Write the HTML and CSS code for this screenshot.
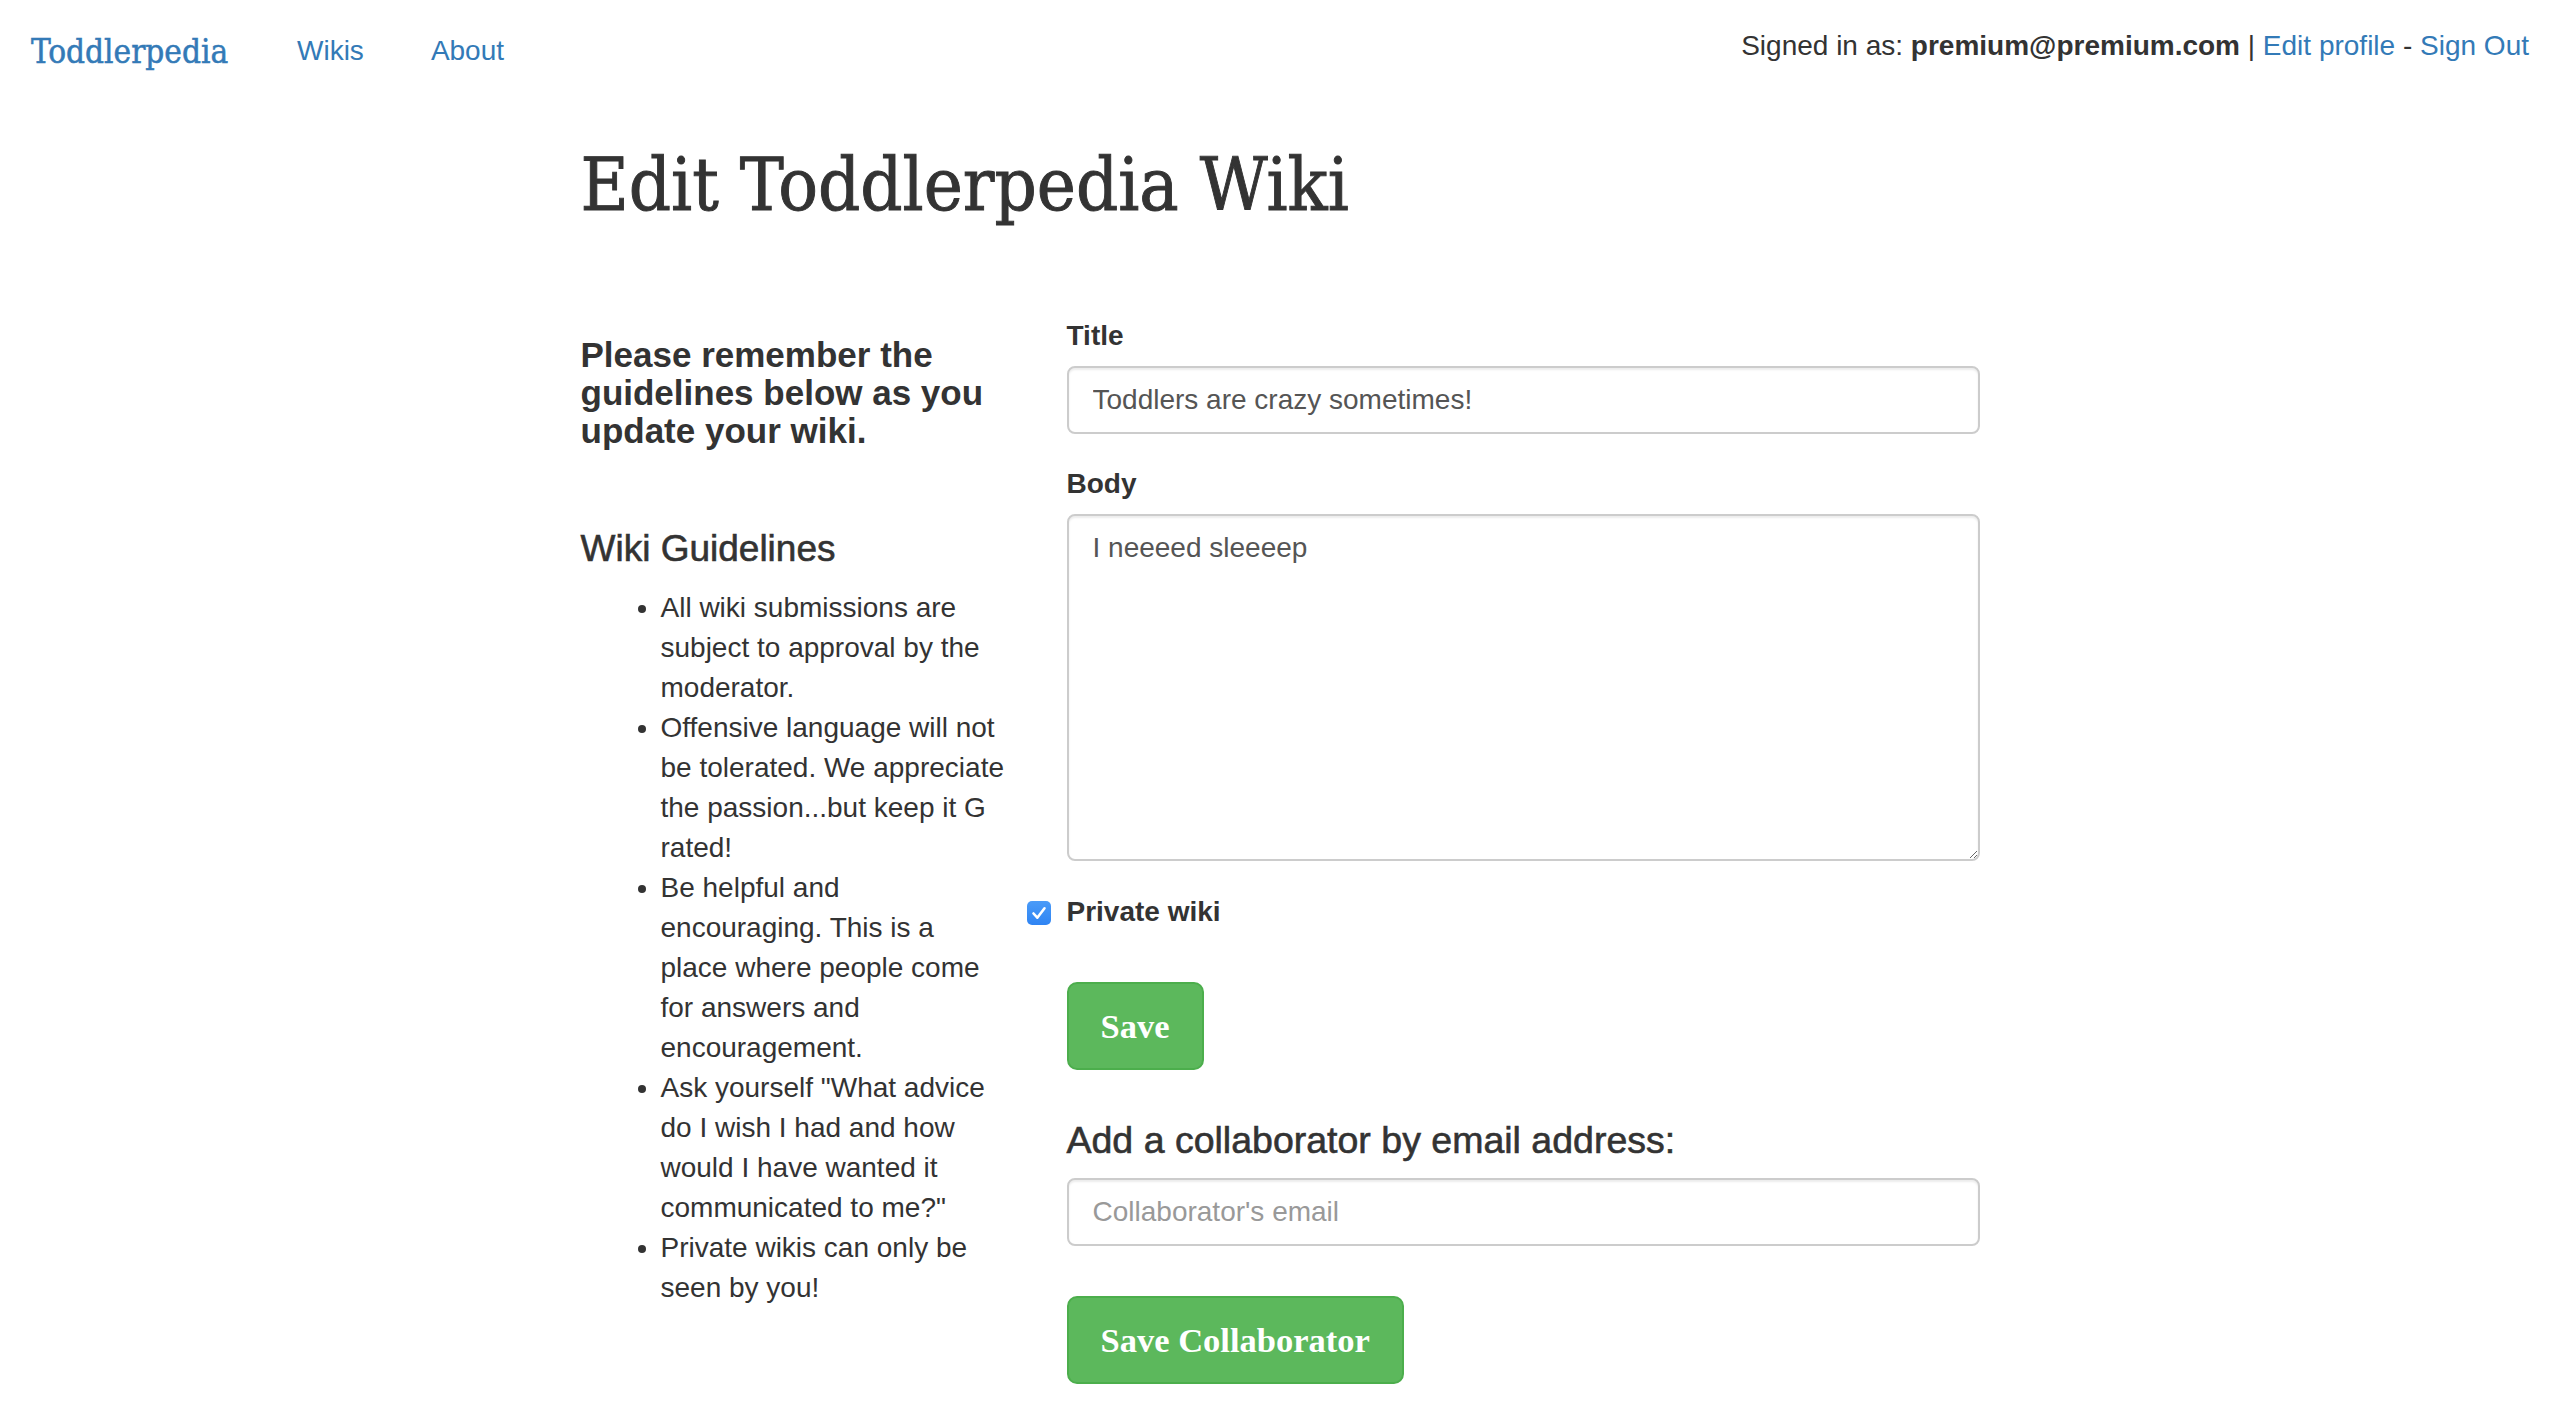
FILE: index.html
```html
<!DOCTYPE html>
<html lang="en">
<head>
<meta charset="utf-8">
<title>Edit Toddlerpedia Wiki</title>
<link rel="stylesheet" href="styles.css">
</head>
<body>
<header class="navbar">
  <a class="brand" href="#">Toddlerpedia</a>
  <nav class="nav-links">
    <a href="#">Wikis</a>
    <a href="#">About</a>
  </nav>
  <p class="user-info">Signed in as: <strong>premium@premium.com</strong> | <a href="#">Edit profile</a> - <a href="#">Sign Out</a></p>
</header>

<main class="container">
  <h1 class="page-title">Edit Toddlerpedia Wiki</h1>
  <div class="row">
    <aside class="guide">
      <h4 class="guide-intro">Please remember the<br>guidelines below as you<br>update your wiki.</h4>
      <h4 class="guide-title">Wiki Guidelines</h4>
      <ul class="guide-list">
        <li>All wiki submissions are<br>subject to approval by the<br>moderator.</li>
        <li>Offensive language will not<br>be tolerated. We appreciate<br>the passion...but keep it G<br>rated!</li>
        <li>Be helpful and<br>encouraging. This is a<br>place where people come<br>for answers and<br>encouragement.</li>
        <li>Ask yourself "What advice<br>do I wish I had and how<br>would I have wanted it<br>communicated to me?"</li>
        <li>Private wikis can only be<br>seen by you!</li>
      </ul>
    </aside>

    <section class="edit">
      <form class="wiki-form">
        <div class="form-group">
          <label class="field-label" for="title">Title</label>
          <input class="form-control" id="title" type="text" value="Toddlers are crazy sometimes!">
        </div>
        <div class="form-group">
          <label class="field-label" for="body">Body</label>
          <textarea class="form-control body-area" id="body">I neeeed sleeeep</textarea>
        </div>
        <label class="check-row">
          <span class="checkbox"><svg viewBox="0 0 24 24" width="24" height="24"><path d="M6.5 12.5l3.8 4.2 7.2-9.4" fill="none" stroke="#fff" stroke-width="2.6" stroke-linecap="round" stroke-linejoin="round"/></svg></span>
          <span class="check-text">Private wiki</span>
        </label>
        <button class="btn btn-save" type="button">Save</button>
      </form>

      <h4 class="collab-title">Add a collaborator by email address:</h4>
      <input class="form-control" type="email" placeholder="Collaborator's email">
      <button class="btn btn-collab" type="button">Save Collaborator</button>
    </section>
  </div>
</main>
</body>
</html>
```

FILE: styles.css
```css
* { box-sizing: border-box; }

html, body {
  margin: 0;
  padding: 0;
  background: #fff;
}

body {
  font-family: "Liberation Sans", Arial, sans-serif;
  font-size: 28px;
  line-height: 40px;
  color: #333;
}

a {
  color: #337ab7;
  text-decoration: none;
}

/* ---------- navbar ---------- */
.navbar {
  display: flex;
  align-items: flex-start;
  height: 100px;
  padding: 0 31px;
}

.brand {
  font-family: "DejaVu Serif Condensed", "DejaVu Serif", serif;
  font-size: 33px;
  line-height: 40px;
  padding-top: 32px;
  min-width: 198px;
  -webkit-text-stroke: 0.5px #337ab7;
}

.nav-links {
  display: flex;
  gap: 67px;
  margin-left: 68px;
  padding-top: 31px;
}

.user-info {
  margin: 0 0 0 auto;
  padding-top: 26px;
}

.user-info strong {
  font-weight: bold;
}

/* ---------- page ---------- */
.container {
  width: 1399px;
  margin: 0 auto;
}

.page-title {
  font-family: "DejaVu Serif Condensed", "DejaVu Serif", serif;
  font-weight: normal;
  font-size: 73.5px;
  line-height: 80px;
  margin: 45px 0 91px;
  color: #333;
  -webkit-text-stroke: 0.9px #333;
}

.row {
  display: grid;
  grid-template-columns: 426px 913px;
  column-gap: 60px;
  align-items: start;
}

/* ---------- guidelines ---------- */
.guide-intro {
  font-size: 35px;
  line-height: 38px;
  font-weight: bold;
  margin: 20px 0 0;
}

.guide-title {
  font-size: 37px;
  line-height: 40px;
  font-weight: normal;
  -webkit-text-stroke: 0.6px #333;
  margin: 79px 0 0;
}

.guide-list {
  margin: 19px 0 0;
  padding-left: 80px;
}

/* ---------- form ---------- */
.form-group {
  margin-bottom: 30px;
}

.field-label {
  display: block;
  font-weight: bold;
  margin-bottom: 10px;
}

.form-control {
  display: block;
  width: 100%;
  height: 68px;
  padding: 12px 24px;
  font-family: "Liberation Sans", Arial, sans-serif;
  font-size: 28px;
  line-height: 40px;
  color: #555;
  background: #fff;
  border: 2px solid #ccc;
  border-radius: 8px;
  box-shadow: inset 0 2px 2px rgba(0, 0, 0, 0.075);
  outline: none;
}

.form-control::placeholder {
  color: #999;
}

.body-area {
  height: 347px;
  resize: vertical;
}

.check-row {
  display: flex;
  align-items: center;
  gap: 16px;
  margin: 31px 0 0 -40px;
  height: 40px;
}

.checkbox {
  display: flex;
  width: 24px;
  height: 24px;
  border-radius: 5px;
  background: linear-gradient(#4a9bf8, #2f84f3);
  margin-top: 1px;
}

.check-text {
  font-weight: bold;
}

.btn {
  display: block;
  font-family: "Liberation Serif", "Times New Roman", serif;
  font-weight: bold;
  font-size: 34.5px;
  line-height: 44px;
  padding: 20px 32px;
  color: #fff;
  background: #5cb85c;
  border: 2px solid #4cae4c;
  border-radius: 10px;
  cursor: pointer;
}

.btn-save {
  margin-top: 50px;
}

.collab-title {
  font-size: 37.5px;
  line-height: 40px;
  font-weight: normal;
  -webkit-text-stroke: 0.6px #333;
  margin: 50px 0 18px;
}

.btn-collab {
  margin-top: 50px;
}
```
